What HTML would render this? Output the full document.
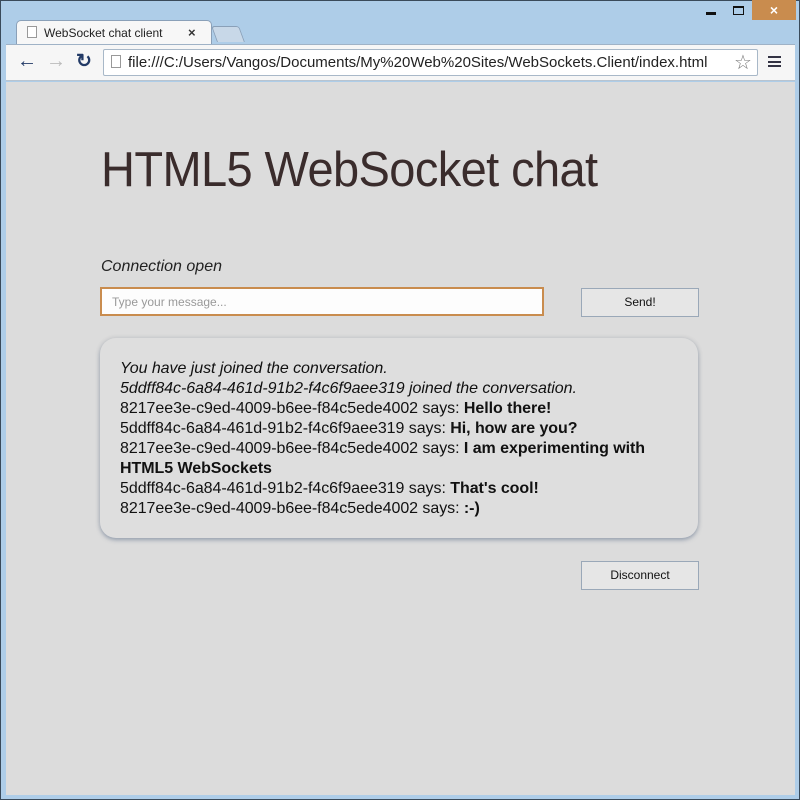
<!DOCTYPE html>
<html><head><style>
*{margin:0;padding:0;box-sizing:border-box}
body{width:800px;height:800px;background:#aecde8;position:relative;overflow:hidden;font-family:"Liberation Sans",Arial,sans-serif}
.frame{position:absolute;left:0;top:0;width:800px;height:800px;border:1px solid #3a4a5a}
.tab{position:absolute;left:16px;top:20px;width:196px;height:26px;background:#f7f7f7;border:1px solid #8aa0b8;border-bottom:none;border-radius:5px 5px 0 0;}
.tab2{position:absolute;left:214px;top:26px;width:28px;height:16px;background:#c8d8e8;border:1px solid #8aa0b8;border-bottom:none;border-radius:3px 3px 0 0;transform:skewX(20deg)}
.tabt{position:absolute;left:44px;top:26px;font-size:12px;color:#222}
.tabx{position:absolute;left:188px;top:25px;font-size:13px;color:#333;font-weight:bold}
.toolbar{position:absolute;left:6px;top:44px;width:789px;height:37px;background:#f6f6f6;border-top:1px solid #9fb2c6;border-bottom:1px solid #b8c4d0}
.url{position:absolute;left:103px;top:49px;width:655px;height:27px;background:#fff;border:1px solid #a8b8c8;border-radius:2px}
.urlt{position:absolute;left:128px;top:54px;font-size:15px;color:#222}
.content{position:absolute;left:6px;top:82px;width:789px;height:713px;background:#dcdcdc}
h1{position:absolute;left:101px;top:140px;font-size:47px;font-weight:normal;color:#3a2c2c;letter-spacing:-0.6px;white-space:nowrap;transform:scaleY(1.05);transform-origin:0 0}
.status{position:absolute;left:101px;top:258px;font-size:16px;font-style:italic;color:#222}
.input{position:absolute;left:100px;top:287px;width:444px;height:29px;background:#fdfdfd;border:2px solid #c98c4e;font-size:12px;color:#999;padding:6px 0 0 10px}
.btn{position:absolute;left:581px;width:118px;height:29px;background:#e6e6e6;border:1px solid #9aa8b8;font-size:12px;color:#111;text-align:center;line-height:27px}
.chat{position:absolute;left:100px;top:338px;width:598px;height:200px;background:#dedede;border-radius:16px;box-shadow:0 2px 4px rgba(90,110,140,.5),0 0 6px rgba(0,0,0,.08);padding:21px 20px;font-size:16px;line-height:20px;color:#111;letter-spacing:-0.05px}
</style></head><body>
<div class="frame"></div>
<div style="position:absolute;left:706px;top:12px;width:10px;height:3px;background:#111"></div>
<div style="position:absolute;left:733px;top:6px;width:11px;height:9px;border:2px solid #111;border-width:2px 1px 1px 1px"></div>
<div style="position:absolute;left:752px;top:0;width:44px;height:20px;background:#c98c4e;color:#fff;text-align:center;font-size:14px;line-height:20px;font-weight:bold">×</div>
<div class="tab"></div><div class="tab2"></div>
<div style="position:absolute;left:27px;top:26px;width:10px;height:12px;border:1px solid #999;background:#fff"></div>
<div class="tabt">WebSocket chat client</div><div class="tabx">×</div>
<div class="toolbar"></div>
<div style="position:absolute;left:17px;top:50px;font-size:20px;color:#223a66;font-weight:bold">←</div>
<div style="position:absolute;left:46px;top:50px;font-size:20px;color:#bbb;font-weight:bold">→</div>
<div style="position:absolute;left:76px;top:50px;font-size:19px;color:#223a66;font-weight:bold">↻</div>
<div class="url"></div>
<div style="position:absolute;left:111px;top:55px;width:10px;height:13px;border:1px solid #999;background:#fff"></div>
<div class="urlt">file:///C:/Users/Vangos/Documents/My%20Web%20Sites/WebSockets.Client/index.html</div>
<div style="position:absolute;left:734px;top:50px;font-size:20px;color:#777">☆</div>
<div style="position:absolute;left:768px;top:56px;width:13px;height:11px;border-top:2px solid #334;border-bottom:2px solid #334"><div style="margin-top:2.5px;height:2px;background:#334"></div></div>
<div class="content"></div>
<h1>HTML5 WebSocket chat</h1>
<div class="status">Connection open</div>
<div class="input">Type your message...</div>
<div class="btn" style="top:288px">Send!</div>
<div class="chat">
<i>You have just joined the conversation.</i><br>
<i>5ddff84c-6a84-461d-91b2-f4c6f9aee319 joined the conversation.</i><br>
8217ee3e-c9ed-4009-b6ee-f84c5ede4002 says: <b>Hello there!</b><br>
5ddff84c-6a84-461d-91b2-f4c6f9aee319 says: <b>Hi, how are you?</b><br>
8217ee3e-c9ed-4009-b6ee-f84c5ede4002 says: <b>I am experimenting with HTML5 WebSockets</b><br>
5ddff84c-6a84-461d-91b2-f4c6f9aee319 says: <b>That's cool!</b><br>
8217ee3e-c9ed-4009-b6ee-f84c5ede4002 says: <b>:-)</b>
</div>
<div class="btn" style="top:561px">Disconnect</div>
</body></html>
